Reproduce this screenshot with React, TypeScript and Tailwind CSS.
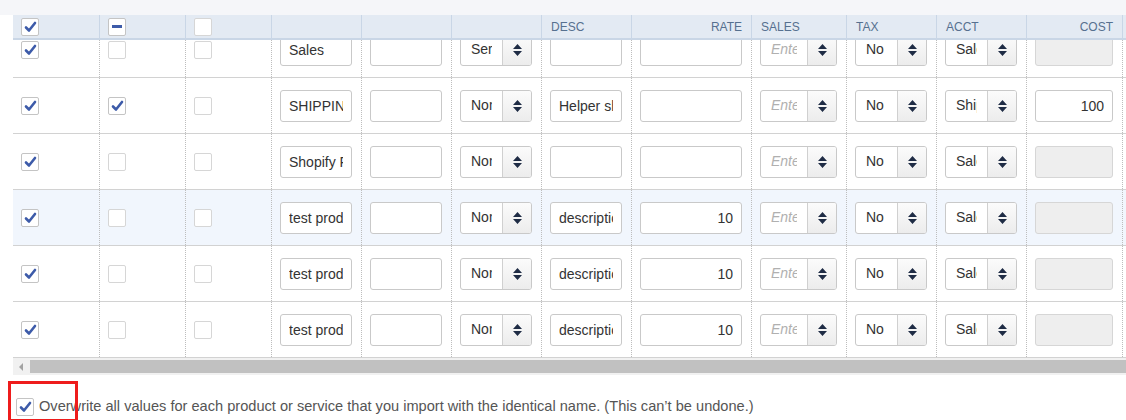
import React from "react";

const COLS =
  "grid grid-cols-[87px_86px_86px_90px_90px_90px_90px_120px_95px_90px_90px_96px_1fr]";

const Check = () => (
  <svg width="13" height="12" viewBox="0 0 13 12">
    <path
      d="M2 6.5 L5 9.5 L11 2"
      stroke="#3d5ba9"
      strokeWidth="2.6"
      fill="none"
      strokeLinecap="round"
      strokeLinejoin="round"
    />
  </svg>
);

const Box = ({ state }: { state: "on" | "off" | "mixed" }) => (
  <div
    className={`w-[18px] h-[18px] bg-white border rounded-[2px] flex items-center justify-center ${
      state === "off" ? "border-[#d6d6d6]" : "border-[#c4c4c4]"
    }`}
  >
    {state === "on" && <Check />}
    {state === "mixed" && <div className="w-[10px] h-[3px] bg-[#3d5ba9]" />}
  </div>
);

const Spinner = () => (
  <svg width="9" height="12" viewBox="0 0 9 12">
    <path d="M4.5 0 L9 5 L0 5 Z M0 7 L9 7 L4.5 12 Z" fill="#1f2c45" />
  </svg>
);

const TextInput = ({
  value,
  right,
  disabled,
}: {
  value?: string;
  right?: boolean;
  disabled?: boolean;
}) => (
  <input
    readOnly
    value={value ?? ""}
    className={`w-full h-[32px] border border-[#c9c9c9] rounded-[3px] px-2 text-[14px] text-[#333] outline-none font-['Liberation_Sans',Arial,sans-serif] ${
      right ? "text-right" : "text-left"
    } ${disabled ? "bg-[#eeeeee] border-[#d6d6d6]" : "bg-white"}`}
  />
);

const Select = ({ value, placeholder }: { value?: string; placeholder?: string }) => (
  <div className="w-full h-[32px] border border-[#c9c9c9] rounded-[3px] bg-white flex overflow-hidden">
    <div className="flex-1 min-w-0 px-[10px] flex items-center">
      <div className="overflow-hidden whitespace-nowrap text-[14px]">
        {value ? (
          <span className="text-[#333]">{value}</span>
        ) : (
          <span className="text-[#b0b0b0] italic">{placeholder}</span>
        )}
      </div>
    </div>
    <div className="w-[29px] shrink-0 border-l border-[#d0d0d0] bg-gradient-to-b from-[#fbfbfb] to-[#ececec] flex items-center justify-center">
      <Spinner />
    </div>
  </div>
);

type Row = {
  c2: boolean;
  name: string;
  type: string;
  desc: string;
  rate: string;
  acct: string;
  cost: string | null;
  hl?: boolean;
};

const rows: Row[] = [
  { c2: false, name: "Sales", type: "Service", desc: "", rate: "", acct: "Sales", cost: null },
  {
    c2: true,
    name: "SHIPPING",
    type: "Non-inventory",
    desc: "Helper shipping product",
    rate: "",
    acct: "Shipping",
    cost: "100",
  },
  { c2: false, name: "Shopify Fees", type: "Non-inventory", desc: "", rate: "", acct: "Sales", cost: null },
  { c2: false, name: "test product", type: "Non-inventory", desc: "description", rate: "10", acct: "Sales", cost: null, hl: true },
  { c2: false, name: "test product", type: "Non-inventory", desc: "description", rate: "10", acct: "Sales", cost: null },
  { c2: false, name: "test product", type: "Non-inventory", desc: "description", rate: "10", acct: "Sales", cost: null },
];

const BodyCell = ({ children }: { children?: React.ReactNode }) => (
  <div className="border-r border-dotted border-[#bdbdbd] pl-2 pr-[9px] flex items-center min-w-0">
    {children}
  </div>
);

const HeadCell = ({ children, right }: { children?: React.ReactNode; right?: boolean }) => (
  <div
    className={`border-r border-[#c9d6e6] px-[9px] flex items-center text-[12px] text-[#56708f] ${
      right ? "justify-end" : ""
    }`}
  >
    {children}
  </div>
);

export default function App() {
  return (
    <div className="w-[1126px] h-[420px] bg-white overflow-hidden font-['Liberation_Sans',Arial,sans-serif]">
      <div className="h-[15px] bg-[#f5f6f9]" />
      <div className="pl-[13px]">
        {/* header */}
        <div className={`${COLS} h-[25px] bg-[#e3eaf3] border-b-2 border-[#c9d6e6]`}>
          <div className="border-r border-[#c9d6e6] pl-2 flex items-center">
            <Box state="on" />
          </div>
          <div className="border-r border-[#c9d6e6] pl-2 flex items-center">
            <Box state="mixed" />
          </div>
          <div className="border-r border-[#c9d6e6] pl-2 flex items-center">
            <Box state="off" />
          </div>
          <HeadCell />
          <HeadCell />
          <HeadCell />
          <HeadCell>DESC</HeadCell>
          <HeadCell right>RATE</HeadCell>
          <HeadCell>SALES</HeadCell>
          <HeadCell>TAX</HeadCell>
          <HeadCell>ACCT</HeadCell>
          <HeadCell right>COST</HeadCell>
          <div />
        </div>
        {/* body */}
        <div className="h-[318px] overflow-hidden">
          <div className="-mt-[18px]">
            {rows.map((r, i) => (
              <div
                key={i}
                className={`${COLS} h-[56px] border-b border-[#d2d2d2] ${r.hl ? "bg-[#f1f6fd]" : "bg-white"}`}
              >
                <BodyCell>
                  <Box state="on" />
                </BodyCell>
                <BodyCell>
                  <Box state={r.c2 ? "on" : "off"} />
                </BodyCell>
                <BodyCell>
                  <Box state="off" />
                </BodyCell>
                <BodyCell>
                  <TextInput value={r.name} />
                </BodyCell>
                <BodyCell>
                  <TextInput />
                </BodyCell>
                <BodyCell>
                  <Select value={r.type} />
                </BodyCell>
                <BodyCell>
                  <TextInput value={r.desc} />
                </BodyCell>
                <BodyCell>
                  <TextInput value={r.rate} right />
                </BodyCell>
                <BodyCell>
                  <Select placeholder="Enter text" />
                </BodyCell>
                <BodyCell>
                  <Select value="No" />
                </BodyCell>
                <BodyCell>
                  <Select value={r.acct} />
                </BodyCell>
                <BodyCell>
                  {r.cost ? <TextInput value={r.cost} right /> : <TextInput disabled />}
                </BodyCell>
                <div />
              </div>
            ))}
          </div>
        </div>
        {/* horizontal scrollbar */}
        <div className="h-[17px] bg-[#f1f1f1] flex">
          <div className="w-[17px] flex items-center justify-center">
            <svg width="5" height="8" viewBox="0 0 5 8">
              <path d="M4 0 L0 4 L4 8 Z" fill="#a3a3a3" />
            </svg>
          </div>
          <div className="flex-1 my-[2px] bg-[#c1c1c1]" />
        </div>
      </div>
      {/* footer */}
      <div className="relative h-[45px]">
        <div className="flex items-center gap-[5px] pl-[16px] pt-[21px]">
          <Box state="on" />
          <span className="text-[14.6px] text-[#555]">
            Overwrite all values for each product or service that you import with the identical name. (This can’t be undone.)
          </span>
        </div>
        <div className="absolute left-[8px] top-[6px] w-[70px] h-[41px] border-[3px] border-[#ee1c1c]" />
      </div>
    </div>
  );
}
